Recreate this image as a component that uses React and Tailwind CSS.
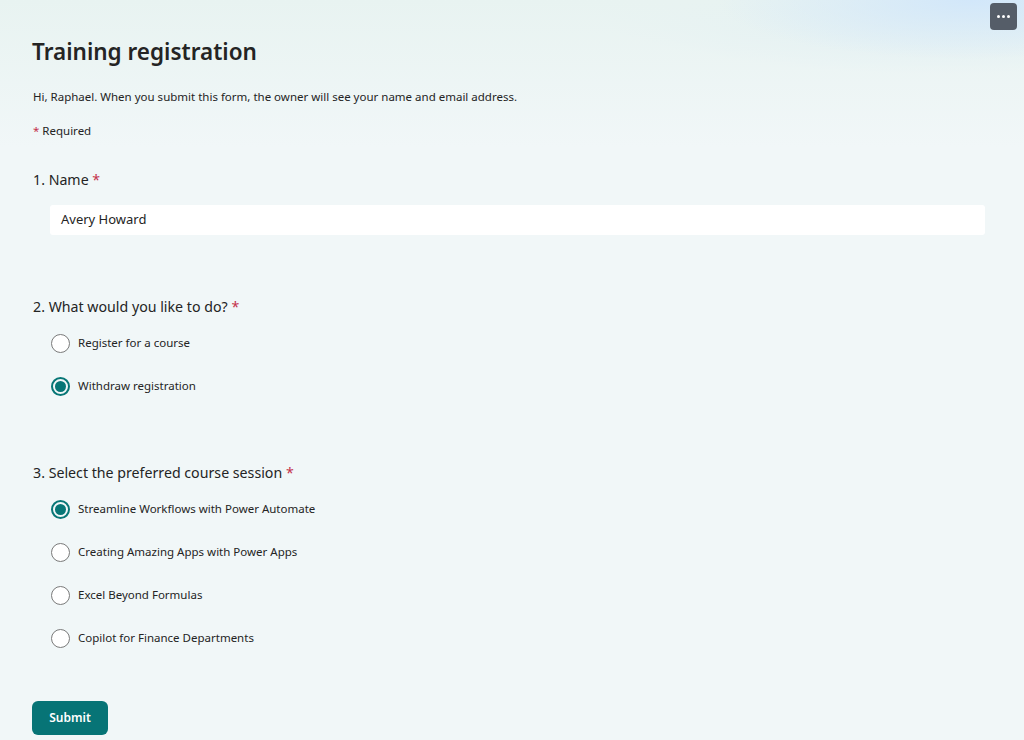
import React from "react";

function Radio({ checked }) {
  return checked ? (
    <span className="w-[19px] h-[19px] rounded-full border-[2.5px] border-[#077676] flex items-center justify-center shrink-0">
      <span className="w-[11px] h-[11px] rounded-full bg-[#077676]" />
    </span>
  ) : (
    <span className="w-[19px] h-[19px] rounded-full border-[1.5px] border-[#7a7a7a] bg-white shrink-0" />
  );
}

function Option({ label, checked }) {
  return (
    <div className="flex items-center gap-[8px] h-[43px] pl-[51px]">
      <Radio checked={checked} />
      <span className="text-[11.5px] text-[#242424]">{label}</span>
    </div>
  );
}

function Question({ n, text }) {
  return (
    <div className="text-[14.2px] text-[#242424] pl-[33px] leading-[20px]">
      {n}. {text} <span className="text-[#c4314b]">*</span>
    </div>
  );
}

export default function App() {
  return (
    <div
      className="relative w-[1024px] h-[740px] overflow-hidden bg-[#f1f7f8]"
      style={{ fontFamily: '"Noto Sans", "Open Sans", sans-serif' }}
    >
      <div className="absolute inset-0 bg-[radial-gradient(ellipse_35%_10%_at_92%_0%,#cfe5f9_0%,rgba(241,247,248,0)_100%)]" />
      <div className="absolute inset-0 bg-[linear-gradient(180deg,#e8f3f1_0%,rgba(241,247,248,0)_20%)]" />
      <div className="absolute inset-0 bg-[radial-gradient(ellipse_25%_8%_at_95%_0%,#d2e7fa_0%,rgba(210,231,250,0)_100%)]" />
      <button className="absolute top-[3px] left-[990px] w-[27px] h-[27px] rounded-[4px] bg-[#555d68] flex items-center justify-center gap-[2px]">
        <span className="w-[3px] h-[3px] rounded-full bg-white" />
        <span className="w-[3px] h-[3px] rounded-full bg-white" />
        <span className="w-[3px] h-[3px] rounded-full bg-white" />
      </button>
      <div className="relative">
        <h1 className="pt-[35px] pl-[32px] text-[22.5px] font-semibold text-[#242424] leading-[34px]">
          Training registration
        </h1>
        <p className="pl-[33px] mt-[19px] text-[11.5px] text-[#242424]">
          Hi, Raphael. When you submit this form, the owner will see your name and email address.
        </p>
        <p className="pl-[33px] mt-[17px] text-[11.5px] text-[#242424]">
          <span className="text-[#c4314b]">*</span> Required
        </p>
        <div className="mt-[30px]">
          <Question n={1} text="Name" />
          <div className="ml-[50px] mr-[39px] mt-[15px] h-[30px] bg-white rounded-[3px] flex items-center pl-[11px] text-[13px] text-[#242424]">
            Avery Howard
          </div>
        </div>
        <div className="mt-[62px]">
          <Question n={2} text="What would you like to do?" />
          <div className="mt-[5px]">
            <Option label="Register for a course" />
            <Option label="Withdraw registration" checked />
          </div>
        </div>
        <div className="mt-[55px]">
          <Question n={3} text="Select the preferred course session" />
          <div className="mt-[5px]">
            <Option label="Streamline Workflows with Power Automate" checked />
            <Option label="Creating Amazing Apps with Power Apps" />
            <Option label="Excel Beyond Formulas" />
            <Option label="Copilot for Finance Departments" />
          </div>
        </div>
        <button className="ml-[32px] mt-[41px] w-[76px] h-[34px] rounded-[6px] bg-[#077476] text-white text-[12px] font-semibold">
          Submit
        </button>
      </div>
    </div>
  );
}
